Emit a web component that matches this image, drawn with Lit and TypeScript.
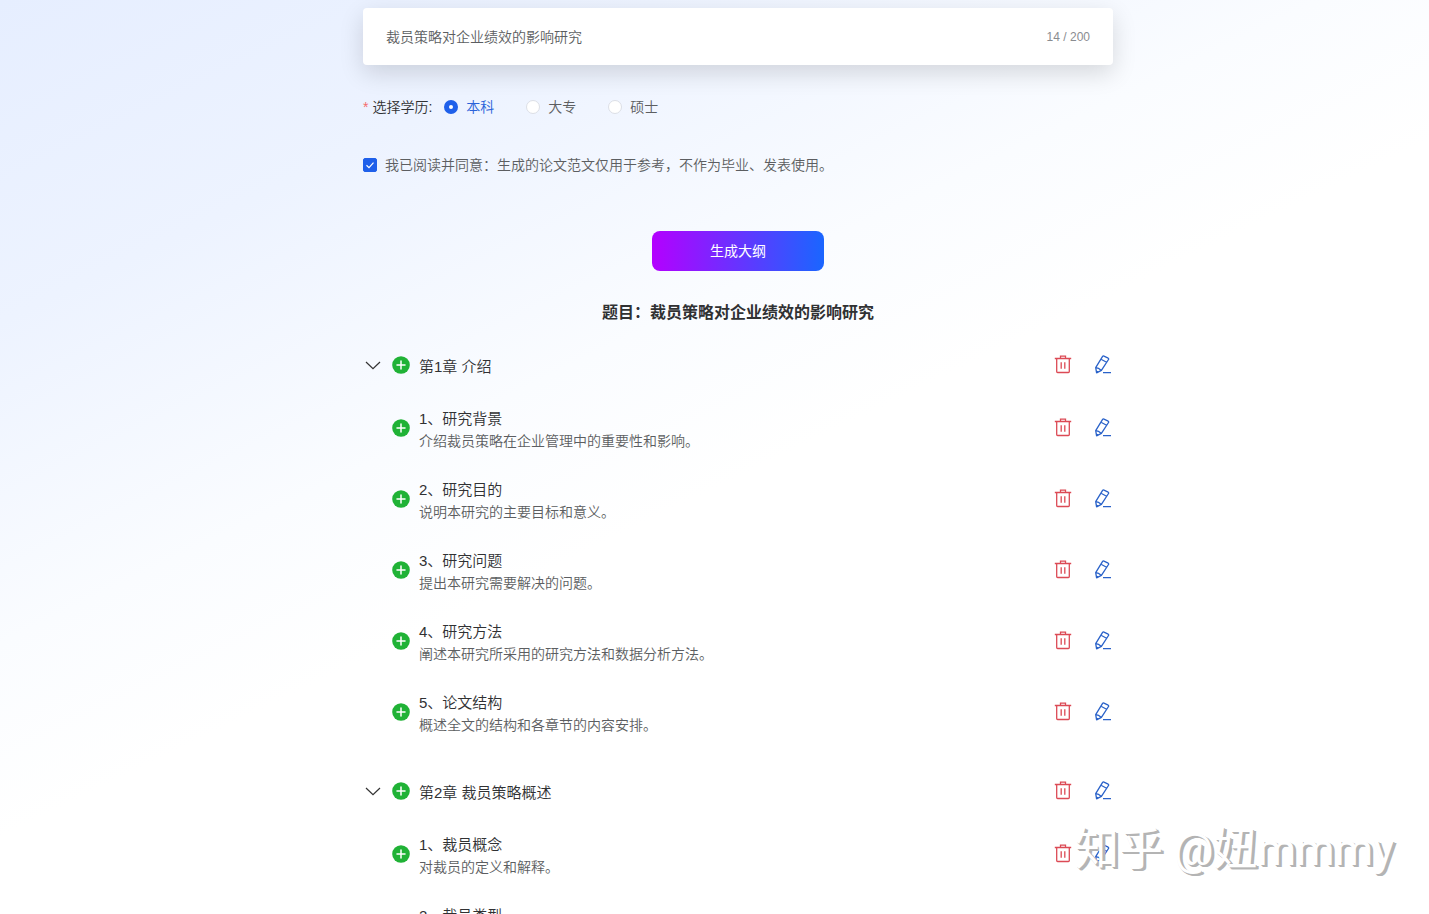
import { LitElement, html, css, nothing } from "lit";
import { customElement, property, state } from "lit/decorators.js";

interface Section {
  title: string;
  desc?: string;
}

interface Chapter {
  title: string;
  sections: Section[];
}

const CHAPTERS: Chapter[] = [
  {
    title: "第1章 介绍",
    sections: [
      { title: "1、研究背景", desc: "介绍裁员策略在企业管理中的重要性和影响。" },
      { title: "2、研究目的", desc: "说明本研究的主要目标和意义。" },
      { title: "3、研究问题", desc: "提出本研究需要解决的问题。" },
      { title: "4、研究方法", desc: "阐述本研究所采用的研究方法和数据分析方法。" },
      { title: "5、论文结构", desc: "概述全文的结构和各章节的内容安排。" },
    ],
  },
  {
    title: "第2章 裁员策略概述",
    sections: [
      { title: "1、裁员概念", desc: "对裁员的定义和解释。" },
      { title: "2、裁员类型" },
    ],
  },
];

const DEGREES = ["本科", "大专", "硕士"];

@customElement("outline-row")
class OutlineRow extends LitElement {
  @property() heading = "";
  @property() desc = "";
  @property({ type: Boolean }) chapter = false;
  @property({ type: Boolean }) open = true;

  static styles = css`
    :host {
      display: flex;
      align-items: center;
      min-height: 48px;
    }
    :host([chapter]) {
      min-height: 26px;
    }
    button {
      display: flex;
      padding: 0;
      border: 0;
      background: none;
      cursor: pointer;
    }
    svg {
      display: block;
      fill: none;
    }
    .lead {
      flex: none;
      display: flex;
      width: 29px;
      box-sizing: border-box;
      padding-left: 2px;
    }
    .chevron {
      color: #333;
    }
    .closed {
      transform: rotate(-90deg);
    }
    .text {
      flex: 1;
      min-width: 0;
      align-self: flex-start;
      padding-top: 4px;
      margin-left: 9px;
    }
    .title,
    .desc {
      margin: 0;
      font-weight: 350;
      line-height: 22px;
    }
    .title {
      font-size: 15px;
      color: #303133;
    }
    .desc {
      font-size: 14px;
      color: #5c5e61;
    }
    .actions {
      flex: none;
      display: flex;
      gap: 22px;
      padding-right: 1px;
    }
    .delete {
      color: #dc4a55;
    }
    .edit {
      color: #2a62c9;
    }
  `;

  private toggle() {
    this.dispatchEvent(new CustomEvent("toggle-chapter"));
  }

  render() {
    const heading = this.chapter
      ? html`<h3 class="title">${this.heading}</h3>`
      : html`<h4 class="title">${this.heading}</h4>`;
    return html`
      <div class="lead">
        ${this.chapter
          ? html`<button class="chevron" aria-label="展开或收起" aria-expanded=${this.open} @click=${this.toggle}>
              <svg class=${this.open ? "" : "closed"} width="16" height="16" viewBox="0 0 16 16">
                <path d="M1 5 L8 11.7 L15 5" stroke="currentColor" stroke-width="1.2" />
              </svg>
            </button>`
          : nothing}
      </div>
      <button class="add" aria-label="添加">
        <svg width="18" height="18" viewBox="0 0 18 18">
          <circle cx="9" cy="9" r="8.8" fill="#20b236" />
          <path d="M9 5 V13 M5 9 H13" stroke="#fff" stroke-width="1.5" stroke-linecap="round" />
        </svg>
      </button>
      <div class="text">
        ${heading} ${this.desc ? html`<p class="desc">${this.desc}</p>` : nothing}
      </div>
      <div class="actions">
        <button class="delete" aria-label="删除">
          <svg width="18" height="20" viewBox="0 0 18 20">
            <path
              d="M0.8 3.5 H17.2 M6.5 3.5 V1.2 H11.5 V3.5 M2.7 3.5 V16.6 Q2.7 17.5 3.6 17.5 H14.4 Q15.3 17.5 15.3 16.6 V3.5 M7.2 7.3 V13.7 M10.8 7.3 V13.7"
              stroke="currentColor"
              stroke-width="1.3"
            />
          </svg>
        </button>
        <button class="edit" aria-label="编辑">
          <svg width="18" height="20" viewBox="0 0 18 20">
            <path
              d="M8.6 1.4 Q9.1 0.7 9.9 1.1 L14.2 3.2 Q15 3.7 14.5 4.5 L7.4 15.4 L2.6 17.8 L1.7 12.6 Z M7 4.3 L12.6 7.3 M1.7 12.6 Q4.6 12.8 7.4 15.4 M9 17.6 H17"
              stroke="currentColor"
              stroke-width="1.3"
              stroke-linejoin="round"
            />
            <path d="M2.2 15.4 L4.9 16.6 L2.6 17.8 Z" fill="currentColor" />
          </svg>
        </button>
      </div>
    `;
  }
}

@customElement("app-root")
class AppRoot extends LitElement {
  @state() private topic = "裁员策略对企业绩效的影响研究";
  @state() private closed = new Set<number>();

  static styles = css`
    :host {
      display: block;
      position: relative;
      height: 100vh;
      overflow: hidden;
      background: linear-gradient(154deg, #e6eeff 0%, #edf3ff 20%, #fafcff 40%, #fff 52%);
      font-family: "Liberation Sans", "Noto Sans CJK SC", sans-serif;
      font-size: 14px;
      font-weight: 350;
      line-height: 22px;
      color: #5c5e61;
    }
    .scroll {
      height: 100%;
      box-sizing: border-box;
      overflow-y: auto;
      scrollbar-width: none;
      padding: 8px 0 40px 47px;
    }
    main {
      width: 100%;
      max-width: 750px;
      margin: 0 auto;
    }
    .topic {
      display: flex;
      align-items: center;
      height: 57px;
      box-sizing: border-box;
      padding: 0 23px;
      background: #fff;
      border-radius: 4px;
      box-shadow: 0 8px 24px rgba(0, 0, 0, 0.14);
    }
    .topic input {
      flex: 1;
      min-width: 0;
      padding: 0;
      border: 0;
      outline: 0;
      background: none;
      font: inherit;
      color: #5c5e61;
    }
    .count {
      font-size: 12px;
      color: #8a8c90;
    }
    .degree {
      display: flex;
      align-items: center;
      margin: 31px 0 0;
      padding: 0;
      border: 0;
    }
    .caption {
      margin-right: 12px;
      color: #303133;
    }
    .star {
      margin-right: 4px;
      color: #f56c6c;
    }
    .options {
      display: flex;
      gap: 32px;
    }
    .option,
    .agree {
      display: flex;
      align-items: center;
      gap: 8px;
      cursor: pointer;
    }
    .option input,
    .agree input {
      flex: none;
      appearance: none;
      width: 14px;
      height: 14px;
      margin: 0;
      box-sizing: border-box;
      border: 1px solid #dcdfe6;
      background: #fff;
    }
    .option input {
      border-radius: 50%;
    }
    .option input:checked {
      border: 5px solid #1f60ea;
    }
    .option:has(input:checked) {
      color: #2a62d9;
    }
    .agree {
      margin-top: 36px;
    }
    .agree input {
      border-radius: 2px;
    }
    .agree input:checked {
      border-color: #1f60ea;
      background: #1f60ea
        url("data:image/svg+xml,%3Csvg xmlns='http://www.w3.org/2000/svg' viewBox='0 0 12 12'%3E%3Cpath d='M2.5 6.2 L5 8.6 L9.5 3.6' fill='none' stroke='white' stroke-width='1.2'/%3E%3C/svg%3E")
        center / 12px 12px no-repeat;
    }
    .generate {
      display: block;
      width: 172px;
      height: 40px;
      margin: 55px auto 0;
      padding: 0;
      border: 0;
      border-radius: 8px;
      background: linear-gradient(90deg, #b400ff, #1a66ff);
      font: inherit;
      font-weight: 400;
      color: #fff;
      cursor: pointer;
    }
    h2 {
      margin: 30px 0 0;
      font-size: 16px;
      line-height: 24px;
      text-align: center;
      color: #303133;
    }
    .outline {
      display: flex;
      flex-direction: column;
      gap: 42px;
      margin-top: 27px;
    }
    .sections {
      display: flex;
      flex-direction: column;
      gap: 23px;
      margin-top: 26px;
    }
    .watermark {
      position: absolute;
      right: 35px;
      bottom: 34px;
      font-family: Roboto, "Noto Sans CJK SC", sans-serif;
      font-size: 44px;
      font-weight: 400;
      line-height: 60px;
      white-space: nowrap;
      color: #fff;
      text-shadow: 1px 1px 0 #b4b4b4, 2px 2px 0 #b4b4b4, 3px 2px 0 #b4b4b4;
      pointer-events: none;
    }
  `;

  private toggle(index: number) {
    const next = new Set(this.closed);
    if (!next.delete(index)) next.add(index);
    this.closed = next;
  }

  render() {
    return html`
      <div class="scroll" lang="zh-CN">
        <main>
          <div class="topic">
            <input
              type="text"
              aria-label="题目"
              maxlength="200"
              .value=${this.topic}
              @input=${(e: Event) => (this.topic = (e.target as HTMLInputElement).value)}
            />
            <span class="count">${this.topic.length} / 200</span>
          </div>

          <div class="degree" role="radiogroup" aria-labelledby="degree-caption">
            <span class="caption" id="degree-caption"><span class="star">*</span>选择学历:</span>
            <div class="options">
              ${DEGREES.map(
                (name, i) => html`<label class="option">
                  <input type="radio" name="degree" value=${name} ?checked=${i === 0} />${name}
                </label>`
              )}
            </div>
          </div>

          <label class="agree">
            <input type="checkbox" checked />我已阅读并同意：生成的论文范文仅用于参考，不作为毕业、发表使用。
          </label>

          <button class="generate">生成大纲</button>

          <h2>题目：${this.topic}</h2>

          <div class="outline">
            ${CHAPTERS.map((chapter, i) => {
              const open = !this.closed.has(i);
              return html`<section>
                <outline-row
                  chapter
                  .open=${open}
                  .heading=${chapter.title}
                  @toggle-chapter=${() => this.toggle(i)}
                ></outline-row>
                ${open
                  ? html`<div class="sections">
                      ${chapter.sections.map(
                        (s) => html`<outline-row .heading=${s.title} .desc=${s.desc ?? ""}></outline-row>`
                      )}
                    </div>`
                  : nothing}
              </section>`;
            })}
          </div>
        </main>
      </div>
      <div class="watermark" lang="zh-CN">知乎 @妞mmmy</div>
    `;
  }
}
